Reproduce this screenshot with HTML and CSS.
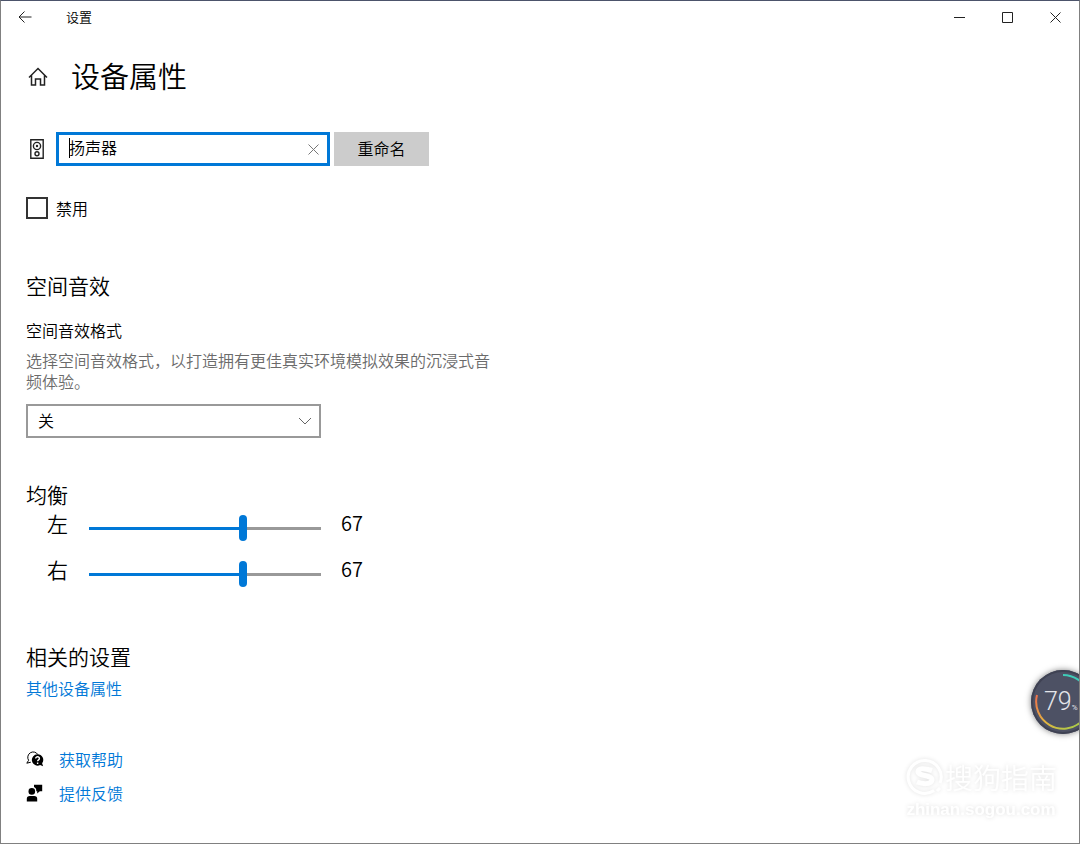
FILE: index.html
```html
<!DOCTYPE html>
<html lang="zh-CN">
<head>
    <meta charset="UTF-8">
    <title>设置</title>
    <link rel="stylesheet" href="styles.css">
</head>
<body>

<div class="window">
    <header class="titlebar">
        <button class="back" aria-label="返回">
            <svg width="14" height="12" viewBox="0 0 14 12"><path d="M6.5 .5L1 6l5.500 5.500M1 6h12.500"/></svg>
        </button>
        <span class="caption">设置</span>
        <div class="controls">
            <button aria-label="最小化">
                <svg width="11" height="11" viewBox="0 0 11 11"><path d="M0 5.500h11"/></svg>
            </button>
            <button aria-label="最大化">
                <svg width="11" height="11" viewBox="0 0 11 11"><path d="M.5 .5h10v10H.5z"/></svg>
            </button>
            <button aria-label="关闭">
                <svg width="11" height="11" viewBox="0 0 11 11"><path d="M.5 .5l10 10M10.500 .5l-10 10"/></svg>
            </button>
        </div>
    </header>

    <main class="content">
        <div class="page-title">
            <svg class="home" width="20" height="20" viewBox="0 0 20 20"><path d="M1 10.500L10 1.500l9 9M3.500 8.500v9.500h4v-6h5v6h4V8.500"/></svg>
            <h1>设备属性</h1>
        </div>

        <form class="device">
            <svg class="speaker" width="14" height="20" viewBox="0 0 14 20">
                <path d="M.8 .8h12.400v18.400H.8z"/>
                <circle cx="7" cy="7" r="3.600"/>
                <circle class="fill" cx="7" cy="7" r="1.200"/>
                <circle cx="7" cy="14.800" r="2"/>
            </svg>
            <div class="field">
                <input type="text" value="扬声器" aria-label="设备名称">
                <button type="button" class="clear" aria-label="清除">
                    <svg width="11" height="11" viewBox="0 0 11 11"><path d="M.5 .5l10 10M10.500 .5l-10 10"/></svg>
                </button>
            </div>
            <button type="button" class="rename">重命名</button>
        </form>

        <label class="disable"><input type="checkbox">禁用</label>

        <section class="spatial">
            <h2>空间音效</h2>
            <label for="format">空间音效格式</label>
            <p>选择空间音效格式，以打造拥有更佳真实环境模拟效果的沉浸式音频体验。</p>
            <div class="select">
                <select id="format">
                    <option>关</option>
                </select>
                <svg width="14" height="8" viewBox="0 0 14 8"><path d="M1 1l6 6 6-6"/></svg>
            </div>
        </section>

        <section class="balance">
            <h2>均衡</h2>
            <div class="channel">
                <label for="left">左</label>
                <input type="range" id="left" min="0" max="100" value="67">
                <output for="left">67</output>
            </div>
            <div class="channel">
                <label for="right">右</label>
                <input type="range" id="right" min="0" max="100" value="67">
                <output for="right">67</output>
            </div>
        </section>

        <section class="related">
            <h2>相关的设置</h2>
            <a href="#">其他设备属性</a>
        </section>

        <nav class="support">
            <a href="#">
                <svg width="18" height="18" viewBox="0 0 18 18">
                    <path class="line" d="M2.600 10.300A5.400 5.400 0 1 1 11.800 4.500M2.600 10.300L.8 13.200l4-1"/>
                    <path d="M11.500 4.200a5.700 5.700 0 1 0 2.600 10.800l3 1.300-1-3A5.700 5.700 0 0 0 11.500 4.200z"/>
                    <path class="mark" d="M9.700 8.600c0-2.600 3.900-2.200 3.700 0-.1 1.300-1.800 1.300-1.800 2.700M11.600 12.500v1.400"/>
                </svg>
                获取帮助
            </a>
            <a href="#">
                <svg width="18" height="18" viewBox="0 0 18 18">
                    <circle cx="5.800" cy="7.400" r="3.300"/>
                    <path d="M.8 17.500v-2.700Q.8 12 3.800 12h4.400q3 0 3 2.800v2.700z"/>
                    <path d="M8 .8h8.200v6.400h-2.400L11.200 9.500V7.200h-.9Q10.500 4 8 3z"/>
                </svg>
                提供反馈
            </a>
        </nav>
    </main>

    <div class="watermark">
        <div class="brand">
            <svg width="40" height="40" viewBox="0 0 40 40">
                <path d="M29 33.500A16.500 16.500 0 1 1 35 26M32 34l3-3"/>
                <path class="s" d="M27 13.500q-13-4-14 1c0 5 14 3 14 8.500-1 5-10 4-15 2"/>
            </svg>
            <span>搜狗指南</span>
        </div>
        <div class="site">zhinan.sogou.com</div>
    </div>

    <div class="monitor">
        <svg width="64" height="64" viewBox="0 0 64 64">
            <defs>
                <linearGradient id="warm" x1="0" y1="0" x2="1" y2="1">
                    <stop offset="0" stop-color="#f0704c"/>
                    <stop offset=".5" stop-color="#e3b440"/>
                    <stop offset="1" stop-color="#a0cf4a"/>
                </linearGradient>
            </defs>
            <path stroke="url(#warm)" d="M6 25A27 27 0 0 0 51 51"/>
            <path stroke="#3fcbb8" d="M32 5A27 27 0 0 1 57 22"/>
        </svg>
        <span class="percent">79<small>%</small></span>
    </div>
</div>

</body>
</html>
```
FILE: styles.css
```css
* {
    box-sizing: border-box;
}

body {
    margin: 0;
    background: #fff;
    color: #000;
    font-family: "Noto Sans CJK SC", sans-serif;
    font-size: 16px;
    font-weight: 350;
    line-height: 24px;
}

h1, h2, p {
    margin: 0;
    font-weight: 350;
}

button, input, select {
    font: inherit;
    color: inherit;
}

svg {
    display: block;
    flex: none;
    fill: none;
    stroke: #222;
}

a {
    color: #0078d7;
    text-decoration: none;
}

.window {
    position: relative;
    min-height: 100vh;
    border: 1px solid #808080;
    border-top-color: #4c546b;
    overflow: hidden;
}

.titlebar {
    display: flex;
    align-items: center;
    height: 32px;
}

.titlebar button {
    display: flex;
    align-items: center;
    justify-content: center;
    width: 48px;
    height: 32px;
    padding: 0;
    border: 0;
    background: none;
}

.caption {
    padding-left: 17px;
    font-size: 13px;
}

.controls {
    display: flex;
    margin-left: auto;
}

.content {
    padding: 20px 25px 36px;
}

.page-title {
    display: flex;
    align-items: center;
    gap: 23px;
    height: 48px;
}

.page-title h1 {
    padding-bottom: 4px;
    font-size: 29px;
    line-height: 44px;
}

.home {
    margin-left: 2px;
    stroke-width: 1.500;
}

.device {
    display: flex;
    align-items: center;
    margin-top: 31px;
}

.speaker {
    margin: 0 12px 0 4px;
    stroke-width: 1.400;
}

.fill {
    fill: #222;
    stroke: none;
}

.field {
    position: relative;
    width: 274px;
}

.field input {
    display: block;
    width: 100%;
    height: 34px;
    padding: 0 36px 4px 10px;
    border: 3px solid #0078d7;
    outline: 0;
    background: #fff;
}

/* text cursor */
.field::before {
    content: "";
    position: absolute;
    top: 6px;
    left: 13px;
    width: 1px;
    height: 20px;
    background: #000;
}

.clear {
    position: absolute;
    top: 3px;
    right: 3px;
    display: flex;
    align-items: center;
    justify-content: center;
    width: 28px;
    height: 28px;
    padding: 0;
    border: 0;
    background: none;
}

.clear svg {
    stroke: #777;
}

.rename {
    width: 95px;
    height: 34px;
    margin-left: 4px;
    padding: 0 0 2px;
    border: 0;
    background: #ccc;
}

.disable {
    display: flex;
    align-items: center;
    gap: 8px;
    width: max-content;
    margin-top: 30px;
}

.disable input {
    appearance: none;
    width: 22px;
    height: 22px;
    margin: 0;
    border: 2px solid #333;
    background: #fff;
}

h2 {
    font-size: 21px;
    line-height: 32px;
}

.spatial {
    max-width: 464px;
    margin-top: 49px;
}

.spatial label {
    display: block;
    margin-top: 17px;
}

.spatial p {
    margin-top: 8px;
    color: #6b6b6b;
    line-height: 21px;
}

.select {
    position: relative;
    width: 295px;
    margin-top: 12px;
}

.select select {
    appearance: none;
    display: block;
    width: 100%;
    height: 34px;
    padding: 0 36px 2px 10px;
    border: 2px solid #999;
    border-radius: 0;
    background: #fff;
}

.select svg {
    position: absolute;
    top: 13px;
    right: 9px;
    stroke: #666;
    pointer-events: none;
}

.balance {
    margin-top: 40px;
}

.channel {
    display: flex;
    align-items: center;
    height: 26px;
    margin-bottom: 20px;
    font-size: 21px;
}

.channel label {
    width: 63px;
    padding-left: 21px;
}

.channel input {
    appearance: none;
    width: 232px;
    height: 26px;
    margin: 10px 20px 0 0;
    background: linear-gradient(90deg, #0078d7 67%, #999 67%) center / 100% 3px no-repeat;
}

.channel input::-webkit-slider-thumb {
    appearance: none;
    width: 8px;
    height: 26px;
    border-radius: 4px;
    background: #0078d7;
}

.channel output {
    font-size: 20px;
}

.related {
    margin-top: 58px;
}

.related a {
    display: block;
    width: max-content;
    margin-top: 4px;
}

.support {
    display: flex;
    flex-direction: column;
    align-items: flex-start;
    gap: 10px;
    margin-top: 47px;
}

.support a {
    display: flex;
    align-items: center;
    gap: 15px;
}

.support svg {
    fill: #000;
    stroke: none;
}

.support .line {
    fill: none;
    stroke: #000;
}

.support .mark {
    fill: none;
    stroke: #fff;
    stroke-width: 1.400;
}

.watermark {
    position: absolute;
    right: 22px;
    bottom: 22px;
    color: #fff;
    filter: drop-shadow(0 0 2px rgba(0, 0, 0, 0.12));
}

.brand {
    display: flex;
    align-items: center;
    font-size: 28px;
    line-height: 44px;
}

.brand svg {
    stroke: #fff;
    stroke-width: 3;
}

.brand .s {
    stroke-width: 5;
}

.site {
    font-family: "Liberation Sans", sans-serif;
    font-size: 17px;
    font-weight: 700;
    line-height: 22px;
    text-align: center;
}

/* desktop widget that hangs over the right edge */
.monitor {
    position: absolute;
    top: 669px;
    right: -16px;
    width: 64px;
    height: 64px;
    border-radius: 50%;
    background: #4d5164;
    box-shadow: inset 0 0 0 2px #3f4253, 0 0 6px rgba(0, 0, 0, 0.5);
}

.monitor svg {
    stroke-width: 2;
}

.percent {
    position: absolute;
    top: 16px;
    left: 13px;
    color: #e4e5ea;
    font-family: Roboto, sans-serif;
    font-size: 25px;
    font-weight: 300;
    line-height: 32px;
    white-space: nowrap;
}

.percent small {
    font-size: 8px;
    font-weight: 400;
}
```
